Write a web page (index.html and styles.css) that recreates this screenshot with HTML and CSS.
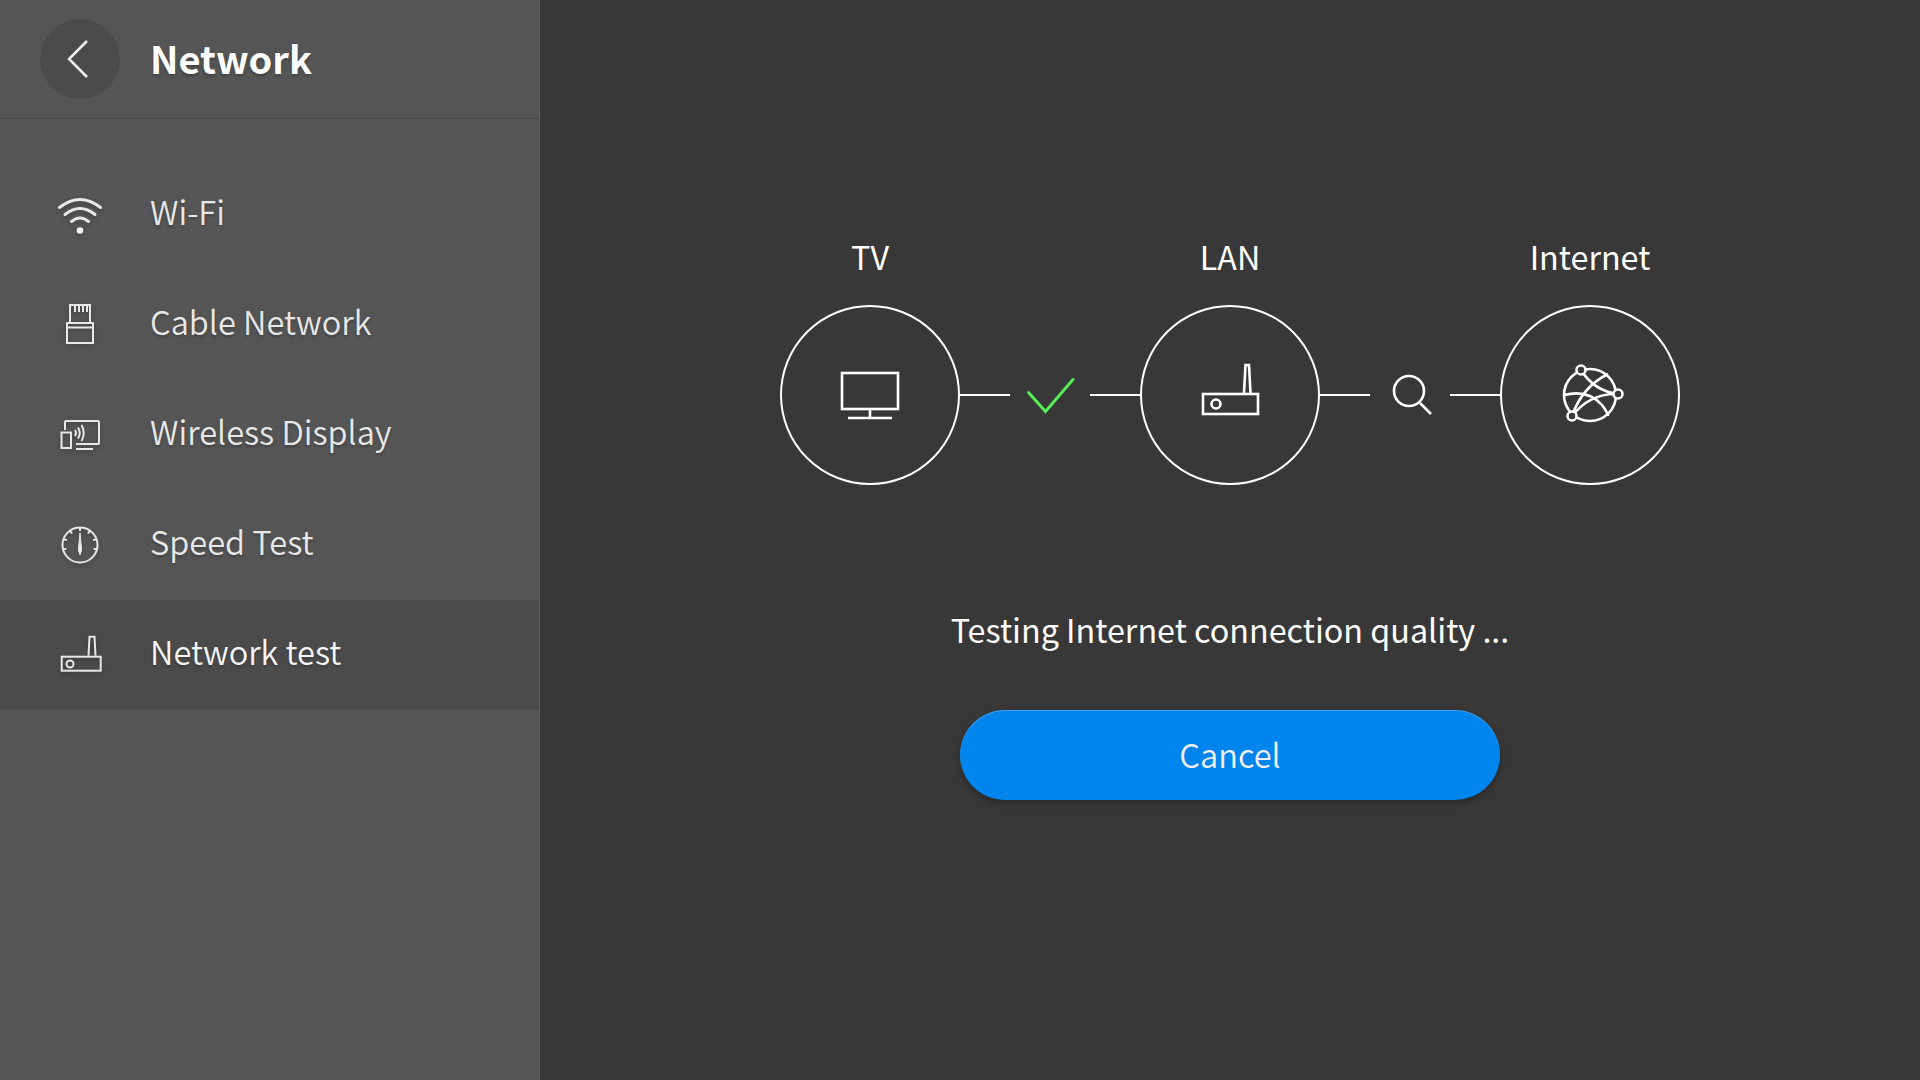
FILE: index.html
```html
<!DOCTYPE html>
<html lang="en">
<head>
  <meta charset="UTF-8" />
  <title>Network</title>
  <link rel="stylesheet" href="styles.css">
</head>
<body>

<!-- Sidebar -->
<div class="sidebar">
  <div class="side-head">
    <div class="back-btn">
      <svg width="80" height="80" viewBox="0 0 80 80"><path d="M46 22 L28 40 46 58" transform="translate(1 0)" /></svg>
    </div>
    <h1>Network</h1>
  </div>

  <div class="menu">
    <div class="menu-item">
      <svg class="menu-icon" width="48" height="48" viewBox="0 0 48 48">
        <path class="thick" d="M3.5 16.5 Q24 0.5 44.5 16.5" />
        <path class="thick" d="M9 23.5 Q24 11.5 39 23.5" />
        <path class="thick" d="M15.5 30.5 Q24 23.5 32.5 30.5" />
        <circle class="dot" cx="24" cy="39.5" r="3.3" />
      </svg>
      <span>Wi-Fi</span>
    </div>
    <div class="menu-item">
      <svg class="menu-icon" width="48" height="48" viewBox="0 0 48 48">
        <rect x="11" y="22" width="26" height="20" />
        <path d="M11 26.5 H37 M14 21 V4 H34 V21 M19 4 V11 M23 4 V11 M27 4 V11 M31 4 V11" />
      </svg>
      <span>Cable Network</span>
    </div>
    <div class="menu-item">
      <svg class="menu-icon" width="48" height="48" viewBox="0 0 48 48">
        <path d="M9 19 V11 Q9 10 10 10 H42 Q43 10 43 11 V32 Q43 33 42 33 H20 M20 38 H37 M19 19 Q21 22 19 25 M22 16.5 Q25.5 22 22 27.5 M25.5 14 Q30 22 25.5 30" />
        <rect x="5.5" y="21.5" width="9.5" height="15.5" />
      </svg>
      <span>Wireless Display</span>
    </div>
    <div class="menu-item">
      <svg class="menu-icon" width="48" height="48" viewBox="0 0 48 48">
        <circle cx="24" cy="24" r="17.5" />
        <g>
          <path d="M24 7 V10" />
          <path d="M24 7 V10" transform="rotate(35 24 24)" />
          <path d="M24 7 V10" transform="rotate(-35 24 24)" />
          <path d="M24 7 V10" transform="rotate(70 24 24)" />
          <path d="M24 7 V10" transform="rotate(-70 24 24)" />
          <path d="M24 7 V10" transform="rotate(105 24 24)" />
          <path d="M24 7 V10" transform="rotate(-105 24 24)" />
        </g>
        <path class="needle" d="M24 12 L22.3 29 L24 34 L25.7 29 Z" />
      </svg>
      <span>Speed Test</span>
    </div>
    <div class="menu-item active">
      <svg class="menu-icon" width="48" height="48" viewBox="0 0 48 48">
        <rect x="5.7" y="25.7" width="39" height="14" />
        <path d="M32.5 24.7 L33.5 5.7 H38.5 L39.5 24.7" />
        <circle cx="14" cy="33" r="3.5" />
      </svg>
      <span>Network test</span>
    </div>
  </div>
</div>

<!-- Test panel -->
<div class="panel">
  <div class="steps">
    <div class="node">
      <div class="node-label">TV</div>
      <div class="node-circle">
        <svg class="bold" width="64" height="64" viewBox="0 0 64 64">
          <rect x="4" y="10" width="56" height="36" />
          <path d="M32 47 V55 M10 55 H54" />
        </svg>
      </div>
    </div>

    <div class="link">
      <span class="link-line"></span>
      <svg width="80" height="80" viewBox="0 0 80 80"><path class="check" d="M18.5 37.5 L35.5 56.5 63 24.5" /></svg>
      <span class="link-line"></span>
    </div>

    <div class="node">
      <div class="node-label">LAN</div>
      <div class="node-circle">
        <svg class="bold" width="64" height="64" viewBox="0 0 64 64">
          <rect x="5" y="31" width="55" height="20" />
          <path d="M46 30 L47.5 2 H51 L52.5 30" />
          <circle cx="18" cy="41" r="4.5" />
        </svg>
      </div>
    </div>

    <div class="link">
      <span class="link-line"></span>
      <svg class="bold" width="80" height="80" viewBox="0 0 80 80">
        <circle cx="39" cy="36" r="15" />
        <path d="M50 48 L61 59" />
      </svg>
      <span class="link-line"></span>
    </div>

    <div class="node">
      <div class="node-label">Internet</div>
      <div class="node-circle">
        <svg class="bold" width="64" height="64" viewBox="0 0 64 64">
          <circle cx="32" cy="32" r="26" />
          <path d="M6 32 Q30 26 44 42 Q50 50 50 53" />
          <path d="M14 53 Q24 24 50 11" />
          <path d="M23 7 Q36 28 60 31" />
          <path d="M14 53 Q32 30 60 31" />
          <circle class="hub" cx="23" cy="7" r="4.5" />
          <circle class="hub" cx="60" cy="31" r="4.5" />
          <circle class="hub" cx="14" cy="53" r="4.5" />
        </svg>
      </div>
    </div>
  </div>

  <p class="status">Testing Internet connection quality ...</p>
  <button class="cancel-btn">Cancel</button>
</div>

</body>
</html>
```

FILE: styles.css
```css
* {
  box-sizing: border-box;
}

body {
  margin: 0;
  width: 1920px;
  height: 1080px;
  overflow: hidden;
  display: flex;
  font-family: "Noto Sans CJK SC", "Noto Sans", sans-serif;
  background-color: #383838;
  color: #fff;
}

svg {
  fill: none;
  stroke: #fff;
  stroke-width: 2;
  display: block;
}

svg.bold {
  stroke-width: 2.6;
}

/* Sidebar */
.sidebar {
  width: 540px;
  height: 100%;
  background-color: #555;
  border-right: 1px solid #606060;
}

.side-head {
  height: 119px;
  display: flex;
  align-items: center;
  padding-left: 40px;
  padding-bottom: 1px;
  border-bottom: 1px solid #444;
}

.back-btn {
  width: 80px;
  height: 80px;
  border-radius: 50%;
  background-color: #4b4b4b;
}

.back-btn svg {
  stroke: #f0f0f0;
  stroke-width: 2.5;
}

.side-head h1 {
  margin: 0 0 2px 30px;
  font-size: 38px;
  font-weight: bold;
  color: #fff;
  text-shadow: 0 2px 3px rgba(0,0,0,0.25);
}

.menu {
  margin-top: 41px;
}

.menu-item {
  height: 110px;
  display: flex;
  align-items: center;
  padding-left: 56px;
  gap: 46px;
  font-size: 32.6px;
  font-weight: 350;
  color: #e8e8e8;
  text-shadow: 0 2px 3px rgba(0,0,0,0.25);
}

.menu-item span {
  position: relative;
  top: -5px;
}

.menu-item.active {
  background-color: #4b4b4b;
  color: #f6f6f6;
}

.menu-icon {
  stroke: #e8e8e8;
  filter: drop-shadow(0 2px 2px rgba(0,0,0,0.25));
}

.menu-icon .thick {
  stroke-width: 3;
  stroke-linecap: round;
}

.menu-icon .dot {
  fill: #f2f2f2;
  stroke: none;
}

.menu-icon .needle {
  fill: #e8e8e8;
  stroke-width: 1;
}

/* Test panel */
.panel {
  flex: 1;
  display: flex;
  flex-direction: column;
  align-items: center;
  padding-top: 231px;
}

.steps {
  display: flex;
  align-items: flex-end;
}

.node {
  width: 180px;
  display: flex;
  flex-direction: column;
  align-items: center;
}

.node-label {
  font-size: 32.3px;
  line-height: 50px;
  margin-bottom: 24px;
  white-space: nowrap;
}

.node-circle {
  width: 180px;
  height: 180px;
  border: 2px solid #fff;
  border-radius: 50%;
  display: flex;
  align-items: center;
  justify-content: center;
}

.node-circle svg {
  overflow: visible;
}

.hub {
  fill: #383838;
}

.link {
  width: 180px;
  height: 180px;
  display: flex;
  align-items: center;
}

.link-line {
  width: 50px;
  height: 2px;
  background-color: #fff;
}

.check {
  stroke: #55ee55;
  stroke-width: 3;
  stroke-linecap: round;
}

.status {
  margin: 119px 0 0;
  font-size: 32.3px;
  line-height: 50px;
}

.cancel-btn {
  width: 540px;
  height: 90px;
  margin-top: 56px;
  padding-bottom: 5px;
  border: none;
  border-radius: 45px;
  background-color: #0085ee;
  box-shadow: inset 0 1px 0 rgba(255,255,255,0.25), 0 3px 6px rgba(0,0,0,0.3);
  color: #f0f0f0;
  font-family: inherit;
  font-size: 32.6px;
  font-weight: 350;
}
```
